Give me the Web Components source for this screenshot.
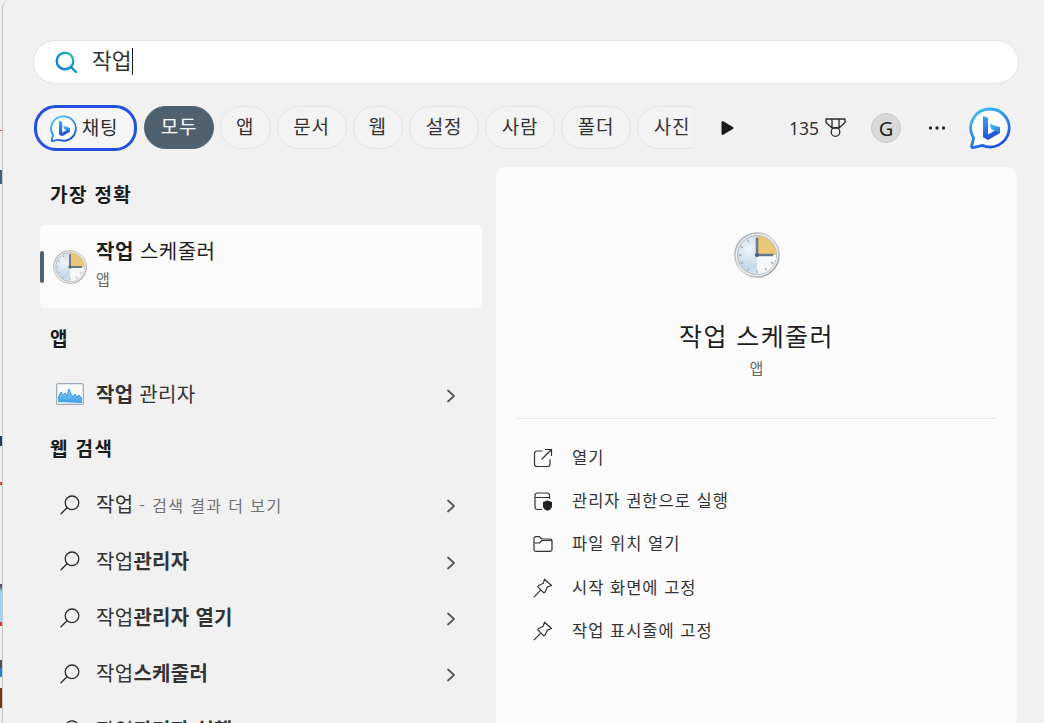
<!DOCTYPE html>
<html lang="ko"><head><meta charset="utf-8">
<style>
html,body{margin:0;height:723px;overflow:hidden;background:#f1f1f1}
body{font-family:"Noto Sans CJK KR","Noto Sans",sans-serif;color:#1b1b1b;position:relative;
background:linear-gradient(to bottom,#efefef 0 130px,#e8562a 130px 131px,#efefef 131px 170px,#40627e 170px 184px,#efefef 184px 436px,#20415f 436px 446px,#efefef 446px 482px,#e33 482px 485px,#efefef 485px 584px,#556 584px 586px,#9ad6f8 592px 622px,#e33 622px 626px,#efefef 626px 660px,#555 660px 668px,#2f7fd0 668px 677px,#efefef 677px 688px,#6e3b14 688px 708px,#efefef 708px) 0 0/2px 723px no-repeat,#f1f1f1}
</style></head><body>
<svg width="0" height="0" style="position:absolute">
<defs>
<linearGradient id="chart" x1="0" y1="0" x2="0" y2="1"><stop offset="0" stop-color="#8fd2fa"/><stop offset="1" stop-color="#3d9be8"/></linearGradient>
</defs>
</svg>

<template id="t-panel">
<style>
:host{display:block;width:1042px;height:723px;margin-left:2px;box-sizing:border-box;border-left:1px solid #c6c6c6;border-top-left-radius:8px;background:#f1f1f1;padding:40px 25px 0 30px;overflow:hidden}
.body{display:flex;margin-top:17px;align-items:flex-start}
.l{width:442px;margin-left:7px;flex:none}
.r{margin-left:14px;width:521px;flex:none}
</style>
<slot name="search"></slot><slot name="tabs"></slot>
<div class="body"><div class="l"><slot name="left"></slot></div><div class="r"><slot name="right"></slot></div></div>
</template>

<template id="t-search">
<style>
:host{display:flex;align-items:center;height:44px;box-sizing:border-box;border:1px solid #e2e2e2;border-radius:22px;background:#fff;padding-left:20px;font-size:21.5px;color:#333}
svg{flex:none;display:block}
.t{margin-left:14px;line-height:28px;margin-top:-3px}
.c{display:inline-block;width:1px;height:27px;background:#1a1a1a;margin-left:0;vertical-align:-6px}
</style>
<svg width="24" height="24" viewBox="0 0 24 24" fill="none" stroke="url(#sq)" stroke-width="2.4" stroke-linecap="round"><defs><linearGradient id="sq" gradientUnits="userSpaceOnUse" x1="3" y1="20" x2="20" y2="2"><stop offset="0" stop-color="#0a79d8"/><stop offset=".65" stop-color="#0e9ccf"/><stop offset="1" stop-color="#5cdc8a"/></linearGradient></defs><circle cx="11" cy="11" r="8.3"/><path d="M17 17l5 5"/></svg>
<span class="t">작업<span class="c"></span></span>
</template>

<template id="t-tabs">
<style>
:host{display:flex;align-items:center;margin-top:22px;height:44px;margin-left:1px}
.strip{display:flex;gap:6px;width:659px;overflow:hidden;flex:none;align-items:flex-start;height:46px}
.right{display:flex;align-items:center;flex:none}
</style>
<div class="strip"><slot></slot></div><div class="right"><slot name="right"></slot></div>
</template>

<template id="t-chip">
<style>
:host{display:inline-flex;align-items:center;justify-content:center;flex:none;width:70px;height:43px;margin-top:1px;box-sizing:border-box;border:1px solid #e4e4e4;border-radius:22px;font-size:19px;letter-spacing:.8px;color:#333;background:#f3f3f3;line-height:24px;white-space:nowrap}
:host([one]){width:50.5px}
:host([active]){background:#4f616e;color:#fff;border-color:#4f616e}
:host([chat]){border:3px solid #1f52e0;background:#f5f5f5;width:103px;height:46px;margin-top:0;gap:5px;margin-right:1px;color:#2a2a2a}
span{margin-top:-3px}
</style>
<slot name="icon"></slot><span><slot></slot></span>
</template>

<template id="t-head">
<style>:host{display:block;font-size:19px;letter-spacing:1.4px;font-weight:700;color:#1a1a1a;line-height:26px;padding-left:10px}</style><slot></slot>
</template>

<template id="t-best">
<style>
:host{display:flex;align-items:center;height:83px;background:#fbfbfb;border-radius:5px;position:relative;margin-top:18px;box-sizing:border-box;padding-left:13px}
.bar{position:absolute;left:0;top:26px;width:4px;height:32px;background:#4f616e;border-radius:2px}
.tx{margin-left:9px;display:flex;flex-direction:column;margin-top:-6px}
.a{font-size:20px;letter-spacing:.5px;line-height:28px;color:#1f1f1f}
.b{font-size:15px;line-height:22px;color:#666;margin-top:3px}
</style>
<div class="bar"></div><slot name="icon"></slot>
<div class="tx"><div class="a"><slot name="title"></slot></div><div class="b"><slot name="sub"></slot></div></div>
</template>

<template id="t-row">
<style>
:host{display:flex;align-items:center;height:56.3px;padding-left:15px;font-size:20px;letter-spacing:.3px;color:#333;position:relative;box-sizing:border-box}
.ic{width:40px;display:flex;flex:none}
.tx{flex:1;margin-top:0;white-space:nowrap;line-height:26px}
svg.ch{position:absolute;left:405px;top:22px}
</style>
<div class="ic"><slot name="icon"></slot></div><div class="tx"><slot></slot></div>
<svg class="ch" width="12" height="16" viewBox="0 0 12 16" fill="none" stroke="#555" stroke-width="1.7" stroke-linecap="round" stroke-linejoin="round"><path d="M3 2.5l6 5.5-6 5.5"/></svg>
</template>

<template id="t-detail">
<style>
:host{display:block;background:#fbfbfb;border-radius:9px;height:560px;box-sizing:border-box;padding:0 21px}
.top{display:flex;flex-direction:column;align-items:center;height:252px;border-bottom:1px solid #e6e6e6;padding-top:65px;box-sizing:border-box}
.n{font-size:25px;letter-spacing:1.4px;line-height:34px;color:#1f1f1f;margin-top:40px}
.s{font-size:15px;line-height:22px;color:#666;margin-top:5px}
.acts{margin-top:17px;padding-left:16px}
</style>
<div class="top"><slot name="icon"></slot><div class="n"><slot name="name"></slot></div><div class="s"><slot name="sub"></slot></div></div>
<div class="acts"><slot></slot></div>
</template>

<template id="t-act">
<style>
:host{display:flex;align-items:center;height:43.3px;font-size:16.5px;letter-spacing:1px;color:#333}
.ic{width:39px;flex:none;display:flex}
.t{margin-top:-2px;line-height:22px}
</style>
<div class="ic"><slot name="icon"></slot></div><div class="t"><slot></slot></div>
</template>

<template id="t-clock">
<style>:host{display:block;line-height:0}</style>
<svg viewBox="0 0 48 48" width="100%" height="100%">
<defs>
<radialGradient id="face" cx=".3" cy=".35" r=".85"><stop offset="0" stop-color="#f0f5f9"/><stop offset=".55" stop-color="#c6d8e7"/><stop offset="1" stop-color="#eaf0f4"/></radialGradient>
<linearGradient id="bez" x1="0" y1="0" x2="1" y2="1"><stop offset="0" stop-color="#9a9ea2"/><stop offset=".5" stop-color="#d8d8d8"/><stop offset="1" stop-color="#8a8e92"/></linearGradient>
</defs>
<circle cx="24" cy="24" r="23" fill="#ececec" stroke="url(#bez)" stroke-width="1.5"/>
<circle cx="24" cy="24" r="20.3" fill="url(#face)" stroke="#aeb4b9" stroke-width="1"/>
<path d="M24 4a20 20 0 0 1 20 20H24z" fill="#e8c878"/>
<path d="M24 44a20 20 0 0 0 20-20H24z" fill="#f6f7f8"/>
<g stroke="#9db0bf" stroke-width="1.4"><path d="M14 8l1.500 2.500M7 15l2.500 1.500M5 24h3M7 33l2.500-1.500M14 40l1.500-2.500M24 43v-3M34 40l-1.500-2.500M41 33l-2.500-1.500"/></g>
<path d="M24 6v18h17" fill="none" stroke="#66798a" stroke-width="2.6"/>
<circle cx="24" cy="24" r="2.200" fill="#4d6171"/>
</svg>
</template>

<template id="t-bing">
<style>:host{display:block;line-height:0;flex:none}</style>
<svg viewBox="0 0 42 42" width="100%" height="100%">
<defs>
<linearGradient id="bb" gradientUnits="userSpaceOnUse" x1="8" y1="4" x2="30" y2="40"><stop offset="0" stop-color="#37bdf5"/><stop offset="1" stop-color="#1b4fd8"/></linearGradient>
<linearGradient id="bbl" gradientUnits="userSpaceOnUse" x1="14" y1="9" x2="22" y2="33"><stop offset="0" stop-color="#3ba6f0"/><stop offset="1" stop-color="#1a49d6"/></linearGradient>
<linearGradient id="bbr" gradientUnits="userSpaceOnUse" x1="21" y1="16" x2="31" y2="26"><stop offset="0" stop-color="#45d4ee"/><stop offset="1" stop-color="#2a6fe3"/></linearGradient>
</defs>
<path d="M21 2a19 19 0 1 1-7.500 36.400L3.800 40.600a1 1 0 0 1-1.200-1.200L4.600 31A19 19 0 0 1 21 2z" fill="#fff" stroke="url(#bb)" stroke-width="2.800" stroke-linejoin="round"/>
<path d="M14 9l5 1.800v16.700l6.800-4-3.300-1.600-2-5 10.500 3.700v5.400L19 33l-5-2.800z" fill="url(#bbl)"/>
<path d="M20.500 16.900l10.500 3.700v5.400l-5.200-2.500-3.300-1.600z" fill="url(#bbr)"/>
</svg>
</template>

<template id="t-lens">
<style>:host{display:block;line-height:0;margin-top:1px}</style>
<svg width="20" height="20" viewBox="0 0 20 20" fill="none" stroke="#2b2b2b" stroke-width="1.300" stroke-linecap="round"><circle cx="12" cy="7.800" r="6.800"/><path d="M7 12.800L1 18.800"/></svg>
</template>

<template id="t-pin">
<style>:host{display:block;line-height:0}</style>
<svg width="20" height="20" viewBox="0 0 20 20" fill="none" stroke="#333" stroke-width="1.200" stroke-linejoin="round" stroke-linecap="round"><path d="M11.500 1.200l7 6.300-4.200 1.600-2.300 5.200-1.200.5-6-6 .7-1.300 4.800-2.300zM7.500 12.300L1.200 18.800"/></svg>
</template>

<x-panel>
<x-search slot="search"></x-search>
<x-tabs slot="tabs">
<x-chip chat><x-bing slot="icon" style="width:27px;height:27px;margin-left:-3px"></x-bing>채팅</x-chip>
<x-chip active>모두</x-chip>
<x-chip one>앱</x-chip><x-chip>문서</x-chip><x-chip one>웹</x-chip><x-chip>설정</x-chip><x-chip>사람</x-chip><x-chip>폴더</x-chip><x-chip>사진</x-chip>
<x-tools slot="right"></x-tools>
</x-tabs>

<x-list slot="left">
<x-head style="margin-top:14px">가장 정확</x-head>
<x-best>
<x-clock slot="icon" style="width:34px;height:34px"></x-clock>
<span slot="title"><b>작업</b> 스케줄러</span><span slot="sub">앱</span>
</x-best>
<x-head style="margin-top:17px">앱</x-head>
<x-row style="margin-top:15px">
<svg slot="icon" width="28" height="22" viewBox="0 0 28 22" style="margin-left:1px"><rect x=".6" y=".6" width="26.800" height="20.800" rx="1.500" fill="#f7f9fb" stroke="#9eabb6" stroke-width="1.200"/><path d="M2 19V15l3-6 2 3 2-2 2 3 2-7 2 5 2 3 2-3 2 3 2-2 3 4v4z" fill="url(#chart)"/><path d="M2 15l3-6 2 3 2-2 2 3 2-7 2 5 2 3 2-3 2 3 2-2 3 4" fill="none" stroke="#2a7fd4" stroke-width=".8"/></svg>
<span style="margin-left:1px"><b>작업</b> 관리자</span>
</x-row>
<x-head style="margin-top:13px">웹 검색</x-head>
<x-row style="margin-top:15px;padding-left:20px"><x-lens slot="icon"></x-lens><span style="margin-left:-4px">작업<span style="font-size:16px;color:#707070;letter-spacing:1.4px"> - 검색 결과 더 보기</span></span></x-row>
<x-row style="padding-left:20px"><x-lens slot="icon"></x-lens><span style="margin-left:-4px">작업<b>관리자</b></span></x-row>
<x-row style="padding-left:20px"><x-lens slot="icon"></x-lens><span style="margin-left:-4px">작업<b>관리자 열기</b></span></x-row>
<x-row style="padding-left:20px"><x-lens slot="icon"></x-lens><span style="margin-left:-4px">작업<b>스케줄러</b></span></x-row>
<x-row style="padding-left:20px"><x-lens slot="icon"></x-lens><span style="margin-left:-4px">작업<b>관리자 실행</b></span></x-row>
</x-list>

<x-detail slot="right">
<x-clock slot="icon" style="width:46px;height:46px"></x-clock>
<span slot="name">작업 스케줄러</span><span slot="sub">앱</span>
<x-act><svg slot="icon" width="20" height="20" viewBox="0 0 20 20" fill="none" stroke="#333" stroke-width="1.200" stroke-linecap="round" stroke-linejoin="round"><path d="M9 3H4a2.500 2.500 0 0 0-2.500 2.500V16A2.500 2.500 0 0 0 4 18.500h10.500A2.500 2.500 0 0 0 17 16v-4.500M12.500 1.500H18.500V7.500M18.500 1.500L9 11"/></svg>열기</x-act>
<x-act><svg slot="icon" width="20" height="20" viewBox="0 0 20 20" fill="none" stroke="#333" stroke-width="1.200"><path d="M9 18.500H4.500a2.500 2.500 0 0 1-2.500-2.500V4.500A2.500 2.500 0 0 1 4.500 2H14a2.500 2.500 0 0 1 2.500 2.500V8M2 6.500h14.500"/><path d="M14.500 9.500l4.500 1.500v4c0 2.500-2 4-4.500 4.800-2.500-.8-4.500-2.300-4.500-4.800v-4z" fill="#222" stroke="none"/></svg>관리자 권한으로 실행</x-act>
<x-act><svg slot="icon" width="20" height="20" viewBox="0 0 20 20" fill="none" stroke="#333" stroke-width="1.200" stroke-linejoin="round"><path d="M1 15.500V4.500A1.800 1.800 0 0 1 2.800 2.700h3.700l2.300 2.300h8.400A1.800 1.800 0 0 1 19 6.800v8.700a1.800 1.800 0 0 1-1.800 1.800H2.800A1.800 1.800 0 0 1 1 15.500zM1 9h5.500l2.300-2.500H19"/></svg>파일 위치 열기</x-act>
<x-act><x-pin slot="icon"></x-pin>시작 화면에 고정</x-act>
<x-act><x-pin slot="icon"></x-pin>작업 표시줄에 고정</x-act>
</x-detail>
</x-panel>

<template id="t-tools">
<style>
:host{display:flex;align-items:center;height:44px;color:#333}
.play{margin-left:27px;display:block}
.n{margin-left:55px;font:17.500px "Noto Sans","Noto Sans CJK KR",sans-serif;color:#333;margin-top:-1px}
.m{margin-left:6px;display:block}
.g{margin-left:25px;width:30px;height:30px;border-radius:50%;background:#d9d9d9;border:1px solid #c9c9c9;box-sizing:border-box;display:flex;align-items:center;justify-content:center;font:20px "Noto Sans",sans-serif;color:#222}
.dots{margin-left:27px;display:block}
x-bing{margin-left:23px;width:42px;height:42px}
</style>
<svg class="play" width="14" height="16" viewBox="0 0 14 16"><path d="M1.500 2.200a1.200 1.200 0 0 1 1.800-1l9.500 5.800a1.200 1.200 0 0 1 0 2l-9.500 5.800a1.200 1.200 0 0 1-1.800-1z" fill="#1a1a1a"/></svg>
<span class="n">135</span>
<svg class="m" width="21" height="20" viewBox="0 0 21 20" fill="none" stroke="#2a2a2a" stroke-width="1.300" stroke-linejoin="round"><path d="M1 1h19v3.500l-6 5.500H7L1 4.500zM7 1v9M14 1v9"/><circle cx="10.500" cy="14" r="4.300"/></svg>
<span class="g">G</span>
<svg class="dots" width="18" height="4" viewBox="0 0 18 4" fill="#2a2a2a"><circle cx="2.500" cy="2" r="1.700"/><circle cx="9" cy="2" r="1.700"/><circle cx="15.500" cy="2" r="1.700"/></svg>
<x-bing></x-bing>
</template>

<script>
const map={panel:'t-panel',search:'t-search',tabs:'t-tabs',chip:'t-chip',head:'t-head',best:'t-best',row:'t-row',detail:'t-detail',act:'t-act',clock:'t-clock',bing:'t-bing',lens:'t-lens',pin:'t-pin',tools:'t-tools'};
for(const [k,id] of Object.entries(map)){
  customElements.define('x-'+k,class extends HTMLElement{
    constructor(){super();this.attachShadow({mode:'open'}).appendChild(document.getElementById(id).content.cloneNode(true));}
  });
}
customElements.define('x-list',class extends HTMLElement{
  constructor(){super();this.attachShadow({mode:'open'}).innerHTML='<style>:host{display:block}</style><slot></slot>';}
});
</script>
</body></html>
